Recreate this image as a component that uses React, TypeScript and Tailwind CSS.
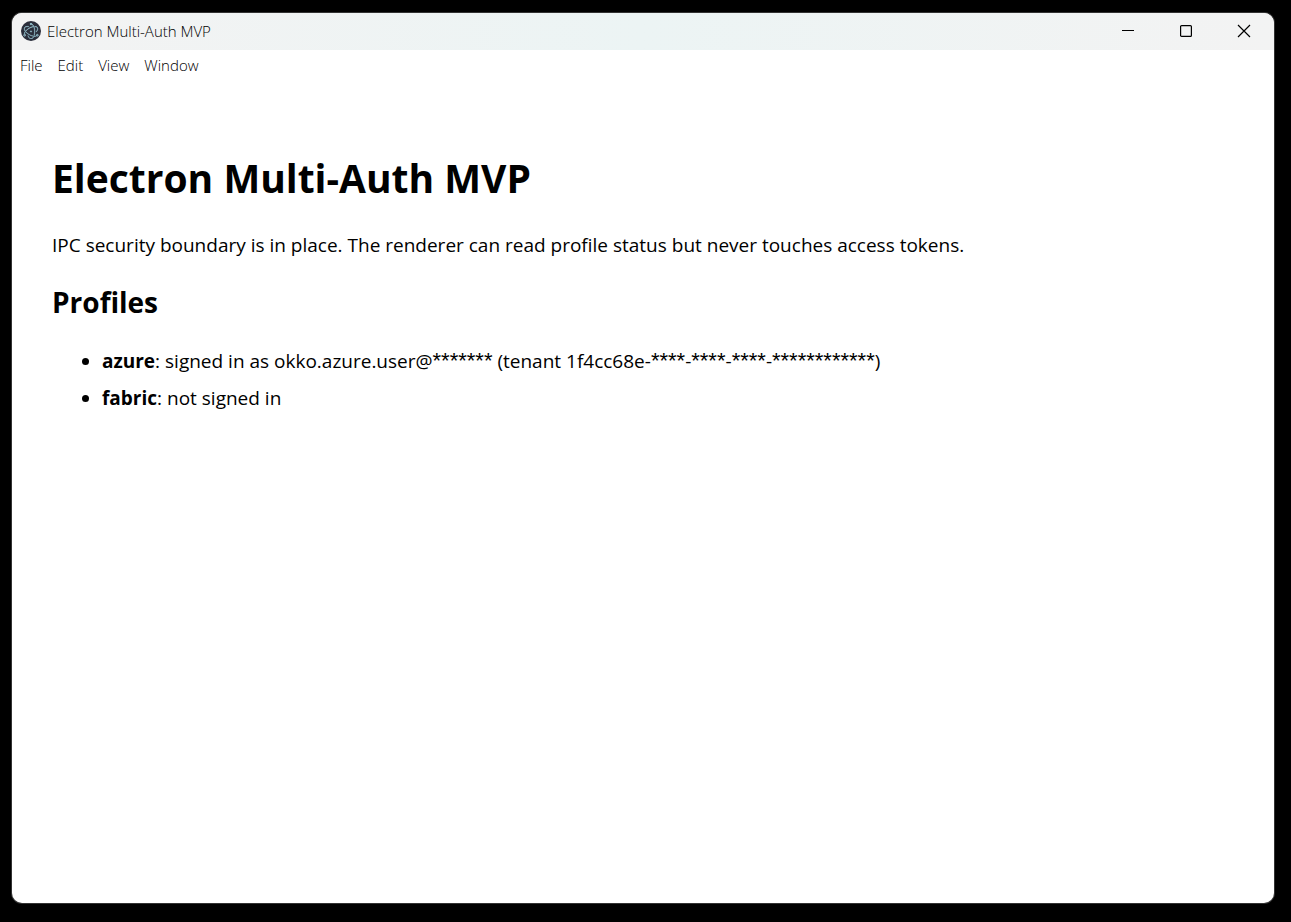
import React from "react";
import { SiElectron } from "react-icons/si";

const APP_TITLE = "Electron Multi-Auth MVP";

const menuItems = ["File", "Edit", "View", "Window"];

const profiles = [
  {
    name: "azure",
    status:
      "signed in as okko.azure.user@******* (tenant 1f4cc68e-****-****-****-************)",
  },
  { name: "fabric", status: "not signed in" },
];

const CaptionButton = ({
  label,
  children,
}: {
  label: string;
  children: React.ReactNode;
}) => {
  return (
    <button
      type="button"
      aria-label={label}
      className="flex h-full w-[58px] items-center justify-center text-black hover:bg-black/5"
    >
      <svg
        width="14"
        height="14"
        viewBox="0 0 14 14"
        fill="none"
        stroke="currentColor"
        strokeWidth="1.2"
      >
        {children}
      </svg>
    </button>
  );
};

const TitleBar = () => {
  return (
    <header className="flex h-[37px] items-center bg-linear-to-r from-[#f3f3f3] via-[#ecf4f4] to-[#f3f3f3] pb-0.5 pl-[9px]">
      <span className="flex h-5 w-5 items-center justify-center rounded-full bg-[#2b2e3b]">
        <SiElectron className="h-4 w-4 stroke-[#a5d3e0] stroke-[0.5] text-[#a5d3e0]" />
      </span>
      <span className="ml-1.5 text-[15px] leading-5 font-[350]">
        {APP_TITLE}
      </span>
      <div className="ml-auto flex h-full pr-px">
        <CaptionButton label="Minimize">
          <path d="M1 6.5h12" strokeWidth="1" />
        </CaptionButton>
        <CaptionButton label="Maximize">
          <rect x="1.6" y="1.6" width="10.8" height="10.8" rx="1" />
        </CaptionButton>
        <CaptionButton label="Close">
          <path d="M1 1l12 12M13 1L1 13" />
        </CaptionButton>
      </div>
    </header>
  );
};

const MenuBar = () => {
  return (
    <nav className="flex gap-[15px] px-2 pt-[5px] text-[15px] leading-5 font-[350]">
      {menuItems.map((item) => (
        <button type="button" key={item}>
          {item}
        </button>
      ))}
    </nav>
  );
};

// Runs of asterisks use a font with a narrower glyph
const MaskedText = ({ text }: { text: string }) => {
  return (
    <>
      {text.split(/(\*+)/).map((part, idx) =>
        part.startsWith("*") ? (
          <span
            key={idx}
            className="font-['Liberation_Sans',sans-serif] text-[22px] leading-none"
          >
            {part}
          </span>
        ) : (
          part
        )
      )}
    </>
  );
};

const App = () => {
  return (
    <div className="flex min-h-screen bg-black pt-[13px] pr-[17px] pb-[19px] pl-3 font-['Open_Sans','Segoe_UI',sans-serif] text-black">
      <div className="flex flex-1 flex-col overflow-hidden rounded-[10px] bg-white ring-1 ring-[#333333]">
        <TitleBar />
        <MenuBar />
        <main className="px-10 pt-[74px]">
          <h1 className="text-[39px] leading-[58px] font-bold">{APP_TITLE}</h1>
          <p className="mt-[23px] text-[19px] leading-[30px]">
            IPC security boundary is in place. The renderer can read profile
            status but never touches access tokens.
          </p>
          <h2 className="mt-5 text-[28px] leading-[44px] font-bold">
            Profiles
          </h2>
          <ul className="mt-[22px] list-disc space-y-[7px] pl-[50px] text-[19px] leading-[30px]">
            {profiles.map((profile) => (
              <li key={profile.name}>
                <strong>{profile.name}</strong>:{" "}
                <MaskedText text={profile.status} />
              </li>
            ))}
          </ul>
        </main>
      </div>
    </div>
  );
};

export default App;
